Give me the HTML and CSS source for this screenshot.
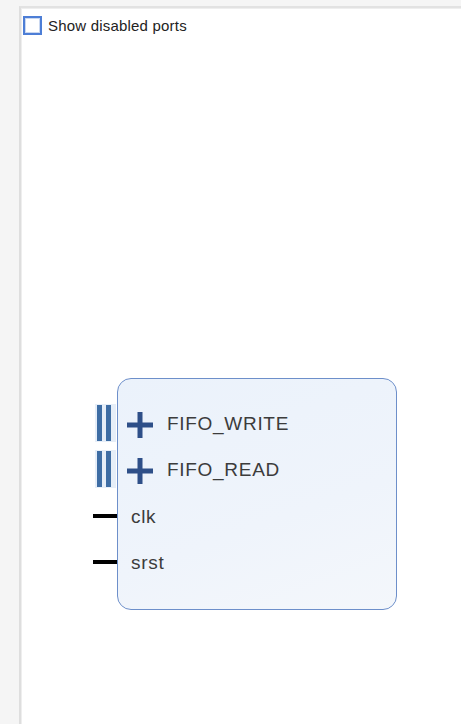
FILE: index.html
```html
<!DOCTYPE html>
<html>
<head>
<meta charset="utf-8">
<link rel="stylesheet" href="styles.css">
</head>
<body>
<div class="frame">
  <div class="corner"></div>
  <div class="topstrip"></div>
  <div class="leftstrip"></div>
  <div class="canvas">
    <label class="opt">
      <span class="box"></span>
      <span class="opt-text">Show disabled ports</span>
    </label>
    <div class="node">
      <div class="row">
        <span class="pin-bus"><i></i><i></i></span>
        <svg class="plus" width="26" height="26" viewBox="0 0 26 26"><path d="M13 0V26M0 13H26" stroke="#2e4f88" stroke-width="5"/></svg>
        <span class="label">FIFO_WRITE</span>
      </div>
      <div class="row">
        <span class="pin-bus"><i></i><i></i></span>
        <svg class="plus" width="26" height="26" viewBox="0 0 26 26"><path d="M13 0V26M0 13H26" stroke="#2e4f88" stroke-width="5"/></svg>
        <span class="label">FIFO_READ</span>
      </div>
      <div class="row">
        <span class="pin-wire"></span>
        <span class="label">clk</span>
      </div>
      <div class="row">
        <span class="pin-wire"></span>
        <span class="label">srst</span>
      </div>
    </div>
  </div>
</div>
</body>
</html>
```

FILE: styles.css
```css
html, body {
  margin: 0;
  padding: 0;
  background: #f5f5f5;
}
.frame {
  display: grid;
  grid-template-columns: 19px 1fr;
  grid-template-rows: 6px 1fr;
  width: 461px;
  height: 724px;
  overflow: hidden;
}
.corner, .topstrip, .leftstrip {
  background: #f5f5f5;
}
.canvas {
  position: relative;
  background: #ffffff;
  border-left: 2px solid #dedede;
  border-top: 2px solid #e2e2e2;
  box-shadow: inset 1px 1px 0 #eeeeee;
}
.opt {
  display: flex;
  align-items: center;
  gap: 6px;
  margin: 8px 0 0 2px;
  font-family: "Liberation Sans", Arial, sans-serif;
  font-size: 15px;
  letter-spacing: 0.2px;
  color: #222;
}
.box {
  width: 15px;
  height: 15px;
  border: 2px solid #4d7ed6;
  background: #fff;
  box-shadow: inset 0 0 0 1px #c9d7f0;
}
.node {
  position: absolute;
  left: 96px;
  top: 370px;
  width: 278px;
  height: 208px;
  border: 1px solid #6d8fca;
  border-radius: 14px;
  background: linear-gradient(160deg, #ebf2fb 0%, #eff4fb 60%, #f4f7fb 100%);
  padding-top: 22px;
}
.row {
  position: relative;
  height: 46.3px;
  display: flex;
  align-items: center;
  font-family: "Liberation Sans", Arial, sans-serif;
  font-size: 19px;
  letter-spacing: 0.7px;
  color: #3c3c3c;
}
.pin-bus {
  position: absolute;
  left: -23px;
  top: 3px;
  width: 21px;
  height: 38px;
  background: #e6eef8;
  display: flex;
  gap: 4px;
  padding-left: 2px;
  box-sizing: border-box;
}
.pin-bus i {
  width: 5px;
  height: 36px;
  margin-top: 1px;
  background: #3e6da4;
}
.plus {
  margin-left: 9px;
  margin-top: 2px;
  margin-right: 14px;
}
.label {
  margin-left: 13px;
}
.plus + .label {
  margin-left: 0;
}
.pin-wire {
  position: absolute;
  left: -25px;
  top: 20px;
  width: 24px;
  height: 4px;
  background: #000;
}
```
